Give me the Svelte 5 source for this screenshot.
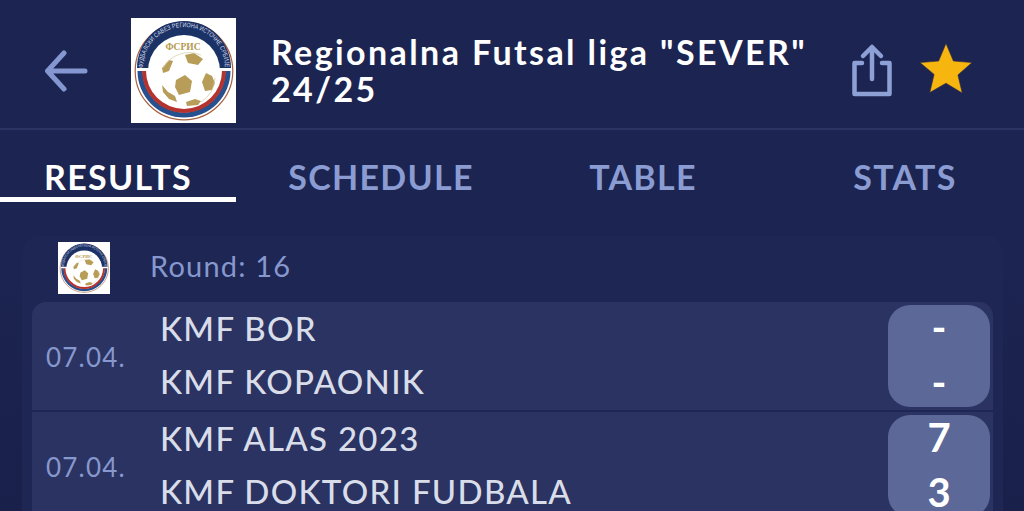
<script>
  const matches = [
    { date: '07.04.', home: 'KMF BOR', away: 'KMF KOPAONIK', homeScore: '-', awayScore: '-' },
    { date: '07.04.', home: 'KMF ALAS 2023', away: 'KMF DOKTORI FUDBALA', homeScore: '7', awayScore: '3' }
  ];
  const tabs = ['RESULTS', 'SCHEDULE', 'TABLE', 'STATS'];
</script>

{#snippet logo()}
  <svg class="logo-svg" viewBox="0 0 105 105" aria-hidden="true">
    <rect width="105" height="105" fill="#fff" />
    <circle cx="53" cy="53" r="48.800" fill="none" stroke="#a8603f" stroke-width="1.200" />
    <path d="M6 50a47 47 0 0 1 94 0z" fill="#1b3266" />
    <path d="M6.500 53a46.500 46.500 0 0 0 93 0h-5a41.500 41.500 0 0 1-83 0z" fill="#27508f" />
    <path d="M11 53a42 42 0 0 0 84 0h-4a38 38 0 0 1-76 0z" fill="#b5332f" />
    <circle cx="53" cy="53" r="36" fill="#fff" />
    <defs><path id="ring" d="M12 50a41 41 0 1 1 82 0" /></defs>
    <text font-size="6.500" fill="#d3d8e8" font-family="'Liberation Sans', sans-serif" textLength="128" lengthAdjust="spacingAndGlyphs"><textPath href="#ring">ФУДБАЛСКИ САВЕЗ РЕГИОНА ИСТОЧНЕ СРБИЈЕ</textPath></text>
    <text x="52" y="32" text-anchor="middle" font-size="9.500" font-weight="700" fill="#b49a50" font-family="'Liberation Serif', serif">ФСРИС</text>
    <g fill="#b79d57">
      <path d="M45 62l9-5 7 6-2 11-11 3-4-8z" />
      <path d="M54 37l9-2 9 6-5 6-10-2z" />
      <path d="M38 42l4 1-4 10-6 2-1-5z" />
      <path d="M75 55l6 3 3 7-3 7-7 1-3-9z" />
      <path d="M31 67l6 7 7 4 2 6-8-3-6-7z" />
      <path d="M55 84l9-3 6 2-3 4-11 1z" />
    </g>
    <path d="M32 50a30 30 0 0 1 38-13M84 60a30 30 0 0 1-14 24" fill="none" stroke="#d5cfae" stroke-width=".8" />
  </svg>
{/snippet}

<div class="screen">
  <header class="header">
    <button class="back" aria-label="Back">
      <svg viewBox="0 0 44 42" width="44" height="42" fill="none" stroke="#8497d0" stroke-width="5" stroke-linecap="round" stroke-linejoin="round">
        <path d="M41 21H4M20 3 3.500 21 20 39" />
      </svg>
    </button>
    <div class="logo">{@render logo()}</div>
    <h1>Regionalna Futsal liga "SEVER" 24/25</h1>
    <div class="actions">
      <svg class="share" viewBox="0 0 40 54" width="40" height="54" fill="none" stroke="#8ea1d6" stroke-width="4.500" stroke-linejoin="round" stroke-linecap="round" aria-label="Share">
        <path d="M10 20H2.500v31h35V20H30" />
        <path d="M20 36V5" />
        <path d="M11 13 20 4 29 13" />
      </svg>
      <svg class="star" viewBox="0 0 54 52" width="54" height="52" aria-label="Favourite">
        <path d="M27 1.500l7.400 17.500 18.600 1.600-14.100 12.300 4.300 18.100L27 41.200 10.800 50.500l4.300-18.100L1 20.600 19.600 19z" fill="#f6b60f" stroke="#30294a" stroke-width=".6" />
      </svg>
    </div>
  </header>

  <nav class="tabs">
    {#each tabs as tab, i}
      <div class="tab" class:active={i === 0}>{tab}</div>
    {/each}
  </nav>

  <section class="card">
    <div class="round">
      <div class="round-logo">{@render logo()}</div>
      <span>Round: 16</span>
    </div>
    <div class="rows">
      {#each matches as m}
        <div class="row">
          <div class="date">{m.date}</div>
          <div class="teams">
            <div>{m.home}</div>
            <div>{m.away}</div>
          </div>
          <div class="score">
            <div>{m.homeScore}</div>
            <div>{m.awayScore}</div>
          </div>
        </div>
      {/each}
    </div>
  </section>
</div>

<style>
  :global(body) {
    margin: 0;
    background: #1c2451;
    overflow: hidden;
  }
  .screen {
    width: 1024px;
    height: 511px;
    overflow: hidden;
    background: linear-gradient(#1c2451 50%, #19204a);
    font-family: Lato, "Open Sans", sans-serif;
  }
  .header {
    height: 130px;
    box-sizing: border-box;
    border-bottom: 2px solid #2a3361;
    display: flex;
    align-items: flex-start;
    padding: 18px 0 0 44px;
  }
  .back {
    width: 44px;
    height: 42px;
    margin-top: 32px;
    padding: 0;
    border: 0;
    background: none;
  }
  .logo {
    width: 105px;
    height: 105px;
    margin-left: 43px;
    flex: none;
  }
  .logo-svg {
    display: block;
    width: 100%;
    height: 100%;
  }
  h1 {
    width: 560px;
    margin: 15px 0 0 35px;
    color: #fff;
    font-size: 34px;
    line-height: 37px;
    font-weight: 700;
    letter-spacing: 2.4px;
  }
  .actions {
    display: flex;
    align-items: flex-start;
    margin-left: 21px;
  }
  .share {
    margin-top: 25px;
  }
  .star {
    margin: 24px 0 0 27px;
  }
  .tabs {
    display: flex;
    gap: 26px;
    height: 72px;
  }
  .tab {
    width: 236px;
    height: 72px;
    box-sizing: border-box;
    padding: 27px 0 0 2px;
    text-align: center;
    color: #8a9cd2;
    font-size: 34px;
    line-height: 40px;
    font-weight: 700;
    letter-spacing: 1.3px;
  }
  .tab.active {
    padding-left: 0;
    color: #fff;
    border-bottom: 5px solid #fff;
  }
  .card {
    margin: 34px 21px 0 22px;
    padding: 6px 10px 0;
    height: 300px;
    background: #1e2654;
    border-radius: 16px 16px 0 0;
  }
  .round {
    height: 60px;
    display: flex;
    align-items: flex-start;
    padding-left: 26px;
    color: #8698ce;
    font-size: 29px;
  }
  .round-logo {
    width: 52px;
    height: 52px;
    flex: none;
  }
  .round span {
    margin: 4px 0 0 40px;
    line-height: 40px;
    letter-spacing: 1.2px;
  }
  .rows {
    display: flex;
    flex-direction: column;
    gap: 2px;
  }
  .row {
    height: 108px;
    display: flex;
    align-items: center;
    background: #2a3361;
    box-sizing: border-box;
  }
  .row:first-child {
    border-radius: 14px 14px 0 0;
  }
  .date {
    width: 129px;
    padding-left: 14px;
    box-sizing: border-box;
    color: #8698ce;
    font-size: 26px;
    letter-spacing: 1.2px;
    padding-top: 1px;
  }
  .teams {
    flex: 1;
    color: #d9dde9;
    font-size: 33px;
    line-height: 53px;
    letter-spacing: 1.3px;
    font-weight: 500;
    margin: -2px 0 0 -1px;
  }
  .score {
    width: 102px;
    height: 102px;
    margin-right: 3px;
    border-radius: 22px;
    background: #5c6898;
    color: #fff;
    font-size: 40px;
    line-height: 55px;
    font-weight: 700;
    text-align: center;
    display: flex;
    flex-direction: column;
    justify-content: flex-start;
    flex: none;
  }
  .score div {
    position: relative;
    top: -5px;
  }
</style>
